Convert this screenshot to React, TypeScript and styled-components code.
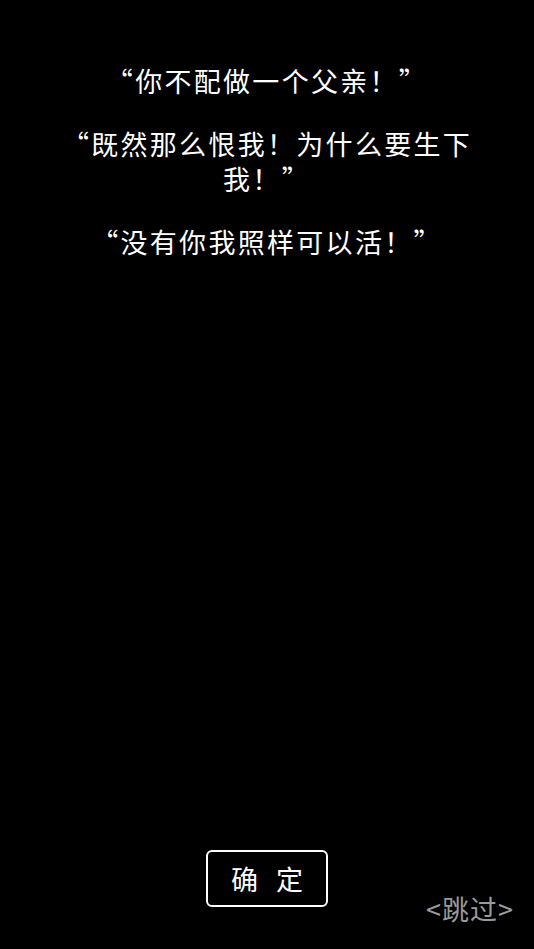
import React from "react";
import styled, { createGlobalStyle } from "styled-components";

const lines: string[] = [
  "“你不配做一个父亲！”",
  "“既然那么恨我！为什么要生下我！”",
  "“没有你我照样可以活！”",
];

const App: React.FC = () => {
  return (
    <>
      <Global />
      <Screen>
        <Dialog>
          {lines.map((t) => (
            <Line key={t}>{t}</Line>
          ))}
        </Dialog>
        <Footer>
          <Confirm>确 定</Confirm>
        </Footer>
        <Skip>&lt;跳过&gt;</Skip>
      </Screen>
    </>
  );
};

export default App;

const Global = createGlobalStyle`
  html, body {
    margin: 0;
    padding: 0;
    background: #000;
  }
  body {
    font-family: "Noto Sans CJK SC", "Noto Sans", sans-serif;
  }
`;

const Screen = styled.div`
  position: relative;
  width: 534px;
  height: 949px;
  background: #000;
  display: flex;
  flex-direction: column;
  align-items: center;
  overflow: hidden;
`;

const Dialog = styled.div`
  width: 424px;
  margin-top: 63px;
  display: flex;
  flex-direction: column;
  gap: 28px;
  flex: 1;
`;

const Line = styled.p`
  margin: 0;
  color: #fff;
  font-size: 27px;
  line-height: 35px;
  letter-spacing: 2.3px;
  text-align: center;
  font-feature-settings: "fwid" 1;
`;

const Footer = styled.div`
  display: flex;
  justify-content: center;
  padding-bottom: 42px;
`;

const Confirm = styled.button`
  width: 122px;
  height: 57px;
  background: transparent;
  border: 2px solid #fff;
  border-radius: 6px;
  color: #fff;
  font-family: "Noto Sans CJK SC", sans-serif;
  font-size: 27px;
  letter-spacing: 6px;
  padding: 0 0 0 6px;
`;

const Skip = styled.span`
  position: absolute;
  right: 20px;
  bottom: 24px;
  color: #9a9a9a;
  font-size: 27px;
  line-height: 32px;
  letter-spacing: 1px;
`;
